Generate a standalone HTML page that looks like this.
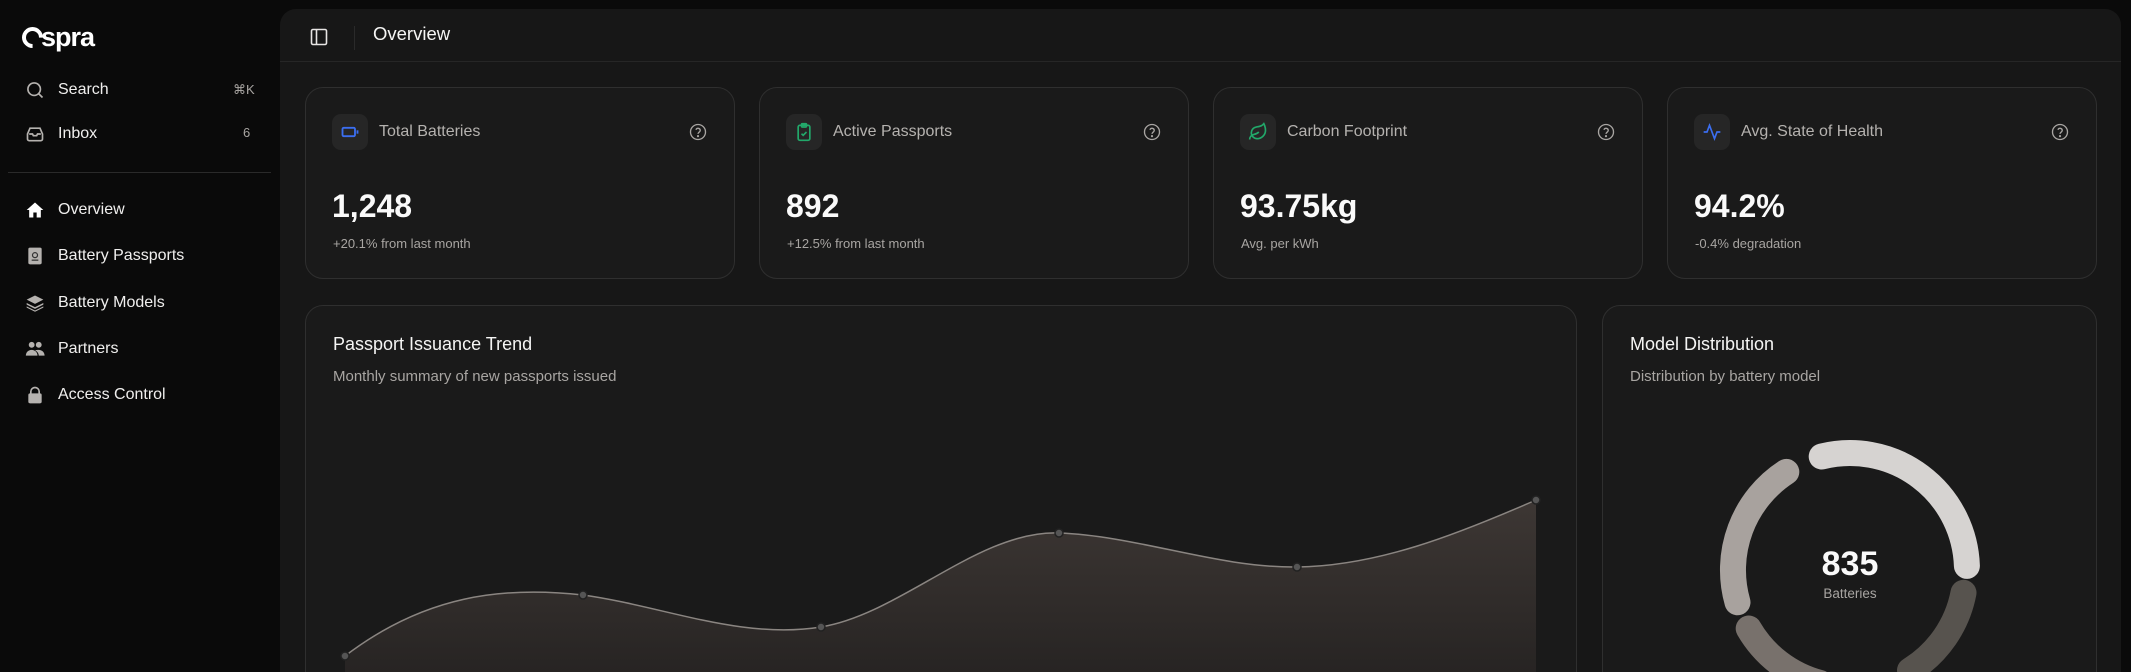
<!DOCTYPE html>
<html style="width:2131px;height:672px;overflow:hidden"><head><meta charset="utf-8"><style>
*{box-sizing:border-box;margin:0;padding:0}
body{width:2131px;height:672px;overflow:hidden;background:#0a0a0a;font-family:"Liberation Sans",sans-serif;color:#e7e5e4;position:relative}
.abs{position:absolute}
.nav{position:absolute;left:25px;display:flex;align-items:center;font-size:16px;color:#f0efee}
.nav svg{width:20px;height:20px;margin-right:13px}
.main{position:absolute;left:280px;top:9px;width:1841px;height:663px;background:#171717;border-radius:16px 16px 0 0}
.card{position:absolute;background:#1a1a1a;border:1px solid #2f2f2f;border-radius:18px}
.ib{position:absolute;left:26px;top:26px;width:36px;height:36px;border-radius:9px;background:#262626;display:flex;align-items:center;justify-content:center}
.ct{position:absolute;left:73px;top:35px;font-size:16px;color:#b5b2af}
.q{position:absolute;right:27px;top:35px}
.val{position:absolute;left:26px;top:100px;font-size:32px;font-weight:bold;color:#fafafa}
.sub{position:absolute;left:27px;top:148px;font-size:13px;color:#a8a5a2}
</style></head><body>
<div class="abs" style="left:22px;top:22px;font-size:27px;font-weight:bold;color:#fff;letter-spacing:-1px">
<span style="display:inline-block;width:21px;height:21px;border:4.5px solid #fff;border-radius:50%;border-right-color:transparent;transform:rotate(45deg);vertical-align:-2px"></span><span style="position:relative;left:-2px">spra</span></div>

<div class="nav" style="top:80px"><svg viewBox="0 0 24 24" fill="none" stroke="#b5b2af" stroke-width="2"><circle cx="11" cy="11" r="7.5"/><path d="M16.5 16.5L21 21"/></svg>Search</div>
<div class="abs" style="left:233px;top:82px;font-size:13px;color:#a8a5a2">⌘K</div>
<div class="nav" style="top:124px"><svg viewBox="0 0 24 24" fill="#b5b2af"><path d="M3 12l3-7h12l3 7v6a2 2 0 0 1-2 2H5a2 2 0 0 1-2-2z M5 12h4l1 2h4l1-2h4" fill="none" stroke="#b5b2af" stroke-width="2"/></svg>Inbox</div>
<div class="abs" style="left:243px;top:125px;font-size:13px;color:#a8a5a2">6</div>
<div class="abs" style="left:8px;top:172px;width:263px;height:1px;background:#2a2a2a"></div>
<div class="nav" style="top:200px"><svg viewBox="0 0 24 24" fill="#fff"><path d="M12 3L2 12h3v9h5v-6h4v6h5v-9h3z"/></svg>Overview</div>
<div class="nav" style="top:246px"><svg viewBox="0 0 24 24"><rect x="4" y="2" width="16" height="20" rx="2" fill="#b5b2af"/><circle cx="12" cy="11" r="3" fill="none" stroke="#333" stroke-width="1.5"/><path d="M8 17h8" stroke="#333" stroke-width="1.5"/></svg>Battery Passports</div>
<div class="nav" style="top:293px"><svg viewBox="0 0 24 24" fill="#b5b2af"><path d="M12 3l10 5-10 5L2 8z"/><path d="M2 12l10 5 10-5v2l-10 5-10-5z"/><path d="M2 16l10 5 10-5v1.5l-10 5-10-5z"/></svg>Battery Models</div>
<div class="nav" style="top:339px"><svg viewBox="0 0 24 24" fill="#b5b2af"><circle cx="8" cy="7" r="3.5"/><circle cx="16.5" cy="7" r="3.5"/><path d="M1 20c0-4 3-7 7-7s7 3 7 7z"/><path d="M12 13.5c1-.4 2.5-.5 4.5-.5 4 0 7 3 7 7h-7c0-2.5-1.5-5-4.5-6.5z"/></svg>Partners</div>
<div class="nav" style="top:385px"><svg viewBox="0 0 24 24" fill="#b5b2af"><path d="M7 11V8a5 5 0 0 1 10 0v3" fill="none" stroke="#b5b2af" stroke-width="2"/><rect x="4" y="10" width="16" height="12" rx="2"/></svg>Access Control</div>

<div class="main">
<svg class="abs" style="left:30px;top:19px" width="18" height="18" viewBox="0 0 18 18" fill="none" stroke="#e7e5e4" stroke-width="1.6"><rect x="1.5" y="1.5" width="15" height="15" rx="1.5"/><path d="M6.5 1.5v15"/></svg>
<div class="abs" style="left:74px;top:17px;width:1px;height:24px;background:#2a2a2a"></div>
<div class="abs" style="left:93px;top:14px;font-size:18.5px;color:#f5f5f4">Overview</div>
<div class="abs" style="left:0;top:52px;width:1841px;height:1px;background:#262626"></div>
</div>

<div class="card" style="left:305px;top:87px;width:430px;height:192px">
<div class="ib"><svg width="20" height="20" viewBox="0 0 24 24" fill="none" stroke="#3b6ef0" stroke-width="2.2"><rect x="3" y="7" width="15" height="10" rx="1.5"/><path d="M21 10v4"/></svg></div>
<div class="ct">Total Batteries</div>
<svg class="q" width="18" height="18" viewBox="0 0 24 24" fill="none" stroke="#a8a5a2" stroke-width="1.8"><circle cx="12" cy="12" r="10"/><path d="M9.2 9a3 3 0 0 1 5.8 1c0 2-3 2.5-3 4.5"/><circle cx="12" cy="17.5" r=".6" fill="#a8a5a2"/></svg>
<div class="val">1,248</div><div class="sub">+20.1% from last month</div></div>

<div class="card" style="left:759px;top:87px;width:430px;height:192px">
<div class="ib"><svg width="20" height="20" viewBox="0 0 24 24" fill="none" stroke="#22a86a" stroke-width="2"><rect x="5" y="4" width="14" height="18" rx="2"/><rect x="9" y="2" width="6" height="4" rx="1"/><path d="M9 14l2 2 4-4"/></svg></div>
<div class="ct">Active Passports</div>
<svg class="q" width="18" height="18" viewBox="0 0 24 24" fill="none" stroke="#a8a5a2" stroke-width="1.8"><circle cx="12" cy="12" r="10"/><path d="M9.2 9a3 3 0 0 1 5.8 1c0 2-3 2.5-3 4.5"/><circle cx="12" cy="17.5" r=".6" fill="#a8a5a2"/></svg>
<div class="val">892</div><div class="sub">+12.5% from last month</div></div>

<div class="card" style="left:1213px;top:87px;width:430px;height:192px">
<div class="ib"><svg width="20" height="20" viewBox="0 0 24 24" fill="none" stroke="#22a86a" stroke-width="2"><path d="M11 20A7 7 0 0 1 9.8 6.1C15.5 5 17 4.5 19 2c1 2 2 4.2 2 8 0 5.5-4.8 10-10 10z"/><path d="M2 21c0-3 1.9-5.4 5.2-6.1C9.5 14.4 12 13 13 12"/></svg></div>
<div class="ct">Carbon Footprint</div>
<svg class="q" width="18" height="18" viewBox="0 0 24 24" fill="none" stroke="#a8a5a2" stroke-width="1.8"><circle cx="12" cy="12" r="10"/><path d="M9.2 9a3 3 0 0 1 5.8 1c0 2-3 2.5-3 4.5"/><circle cx="12" cy="17.5" r=".6" fill="#a8a5a2"/></svg>
<div class="val">93.75kg</div><div class="sub">Avg. per kWh</div></div>

<div class="card" style="left:1667px;top:87px;width:430px;height:192px">
<div class="ib"><svg width="20" height="20" viewBox="0 0 24 24" fill="none" stroke="#3b6ef0" stroke-width="2"><path d="M2 12h4l3-8 6 16 3-8h4"/></svg></div>
<div class="ct">Avg. State of Health</div>
<svg class="q" width="18" height="18" viewBox="0 0 24 24" fill="none" stroke="#a8a5a2" stroke-width="1.8"><circle cx="12" cy="12" r="10"/><path d="M9.2 9a3 3 0 0 1 5.8 1c0 2-3 2.5-3 4.5"/><circle cx="12" cy="17.5" r=".6" fill="#a8a5a2"/></svg>
<div class="val">94.2%</div><div class="sub">-0.4% degradation</div></div>

<div class="card" style="left:305px;top:305px;width:1272px;height:400px">
<div class="abs" style="left:27px;top:28px;font-size:18px;color:#f5f5f4">Passport Issuance Trend</div>
<div class="abs" style="left:27px;top:62px;font-size:15px;color:#a8a5a2">Monthly summary of new passports issued</div>
</div>
<svg class="abs" style="left:0;top:0" width="2131" height="672">
<defs><linearGradient id="g" x1="0" y1="0" x2="0" y2="1"><stop offset="0" stop-color="#3d3734"/><stop offset="1" stop-color="#272423"/></linearGradient></defs>
<path d="M345 656 C425 595,503 586,583 595 C663 606,741 640,821 627 C901 614,979 530,1059 533 C1139 536,1217 568,1297 567 C1377 566,1456 535,1536 500 L1536 672 L345 672 Z" fill="url(#g)"/>
<path d="M345 656 C425 595,503 586,583 595 C663 606,741 640,821 627 C901 614,979 530,1059 533 C1139 536,1217 568,1297 567 C1377 566,1456 535,1536 500" fill="none" stroke="#8a8581" stroke-width="1.5"/>
<g fill="#555" stroke="#222" stroke-width="1.5"><circle cx="345" cy="656" r="4"/><circle cx="583" cy="595" r="4"/><circle cx="821" cy="627" r="4"/><circle cx="1059" cy="533" r="4"/><circle cx="1297" cy="567" r="4"/><circle cx="1536" cy="500" r="4"/></g>
</svg>

<div class="card" style="left:1602px;top:305px;width:495px;height:400px">
<div class="abs" style="left:27px;top:28px;font-size:18px;color:#f5f5f4">Model Distribution</div>
<div class="abs" style="left:27px;top:62px;font-size:15px;color:#a8a5a2">Distribution by battery model</div>
</div>
<svg class="abs" style="left:1700px;top:420px" width="300" height="252" viewBox="-150 -150 300 252" fill="none" stroke-width="26" stroke-linecap="round">
<path d="M-28.3 -113.5 A117 117 0 0 1 116.9 -4.1" stroke="#d6d3d1"/>
<path d="M113.5 22.8 A117 117 0 0 1 60 100.4" stroke="#57534e"/>
<path d="M-30 113 A117 117 0 0 1 -101.3 58.5" stroke="#78716c"/>
<path d="M-112.5 32.3 A117 117 0 0 1 -63.7 -98.1" stroke="#a8a29e"/>
</svg>
<div class="abs" style="left:1780px;top:545px;width:140px;text-align:center;font-size:34px;font-weight:bold;color:#fafafa">835</div>
<div class="abs" style="left:1780px;top:586px;width:140px;text-align:center;font-size:13.5px;color:#a8a5a2">Batteries</div>
</body></html>
